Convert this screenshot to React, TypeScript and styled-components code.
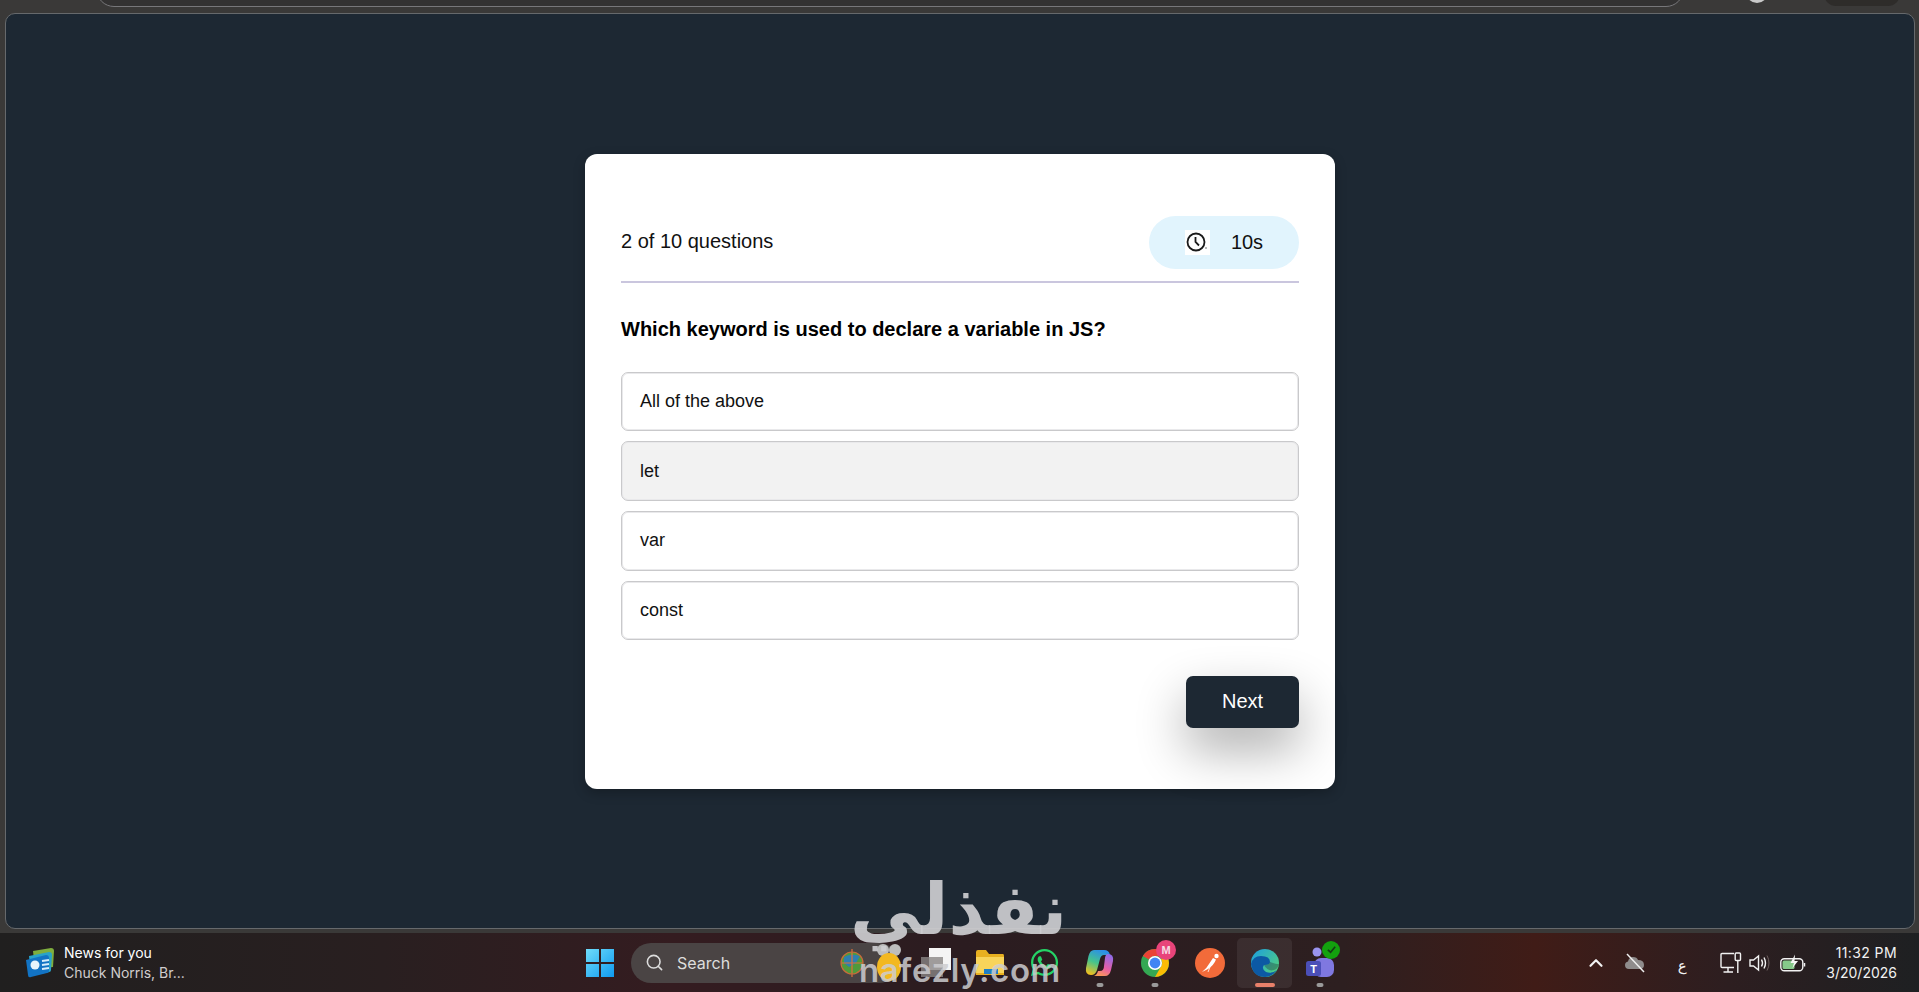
import React from "react";
import styled, { createGlobalStyle } from "styled-components";
import { ChevronUp, Search } from "lucide-react";
import { FaWhatsapp } from "react-icons/fa";

const GlobalStyle = createGlobalStyle`
  html, body {
    margin: 0;
    padding: 0;
    background: #3a3a3a;
    font-family: "Liberation Sans", Arial, sans-serif;
    overflow: hidden;
  }
  * { box-sizing: border-box; }
`;

const Screen = styled.div`
  position: relative;
  width: 1919px;
  height: 992px;
  display: flex;
  flex-direction: column;
  overflow: hidden;
  background: #3a3938;
`;

const BrowserStrip = styled.div`
  height: 13px;
  flex: none;
  display: flex;
  padding-left: 96px;
  overflow: hidden;
`;

const AddressBar = styled.div`
  width: 1588px;
  height: 37px;
  margin-top: -30px;
  flex: none;
  border: 1px solid #77777a;
  border-radius: 18px;
  background: #333232;
`;

const ProfileDot = styled.div`
  width: 22px;
  height: 22px;
  margin: -19px 0 0 62px;
  border-radius: 50%;
  background: #c9c9c9;
  flex: none;
`;

const ProfileChip = styled.div`
  width: 76px;
  height: 24px;
  margin: -18px 0 0 56px;
  border-radius: 12px;
  background: #2e2c2a;
  flex: none;
`;

const PagePanel = styled.main`
  flex: 1;
  margin: 0 4px 0 5px;
  display: flex;
  align-items: center;
  justify-content: center;
  background: #1d2833;
  border: 1px solid #66696c;
  border-radius: 10px;
`;

const QuizCard = styled.section`
  width: 750px;
  height: 635px;
  padding: 62px 36px 0;
  background: #fff;
  border-radius: 12px;
  box-shadow: 0 4px 12px rgba(0, 0, 0, 0.25);
`;

const QuizHeader = styled.header`
  display: flex;
  align-items: center;
  justify-content: space-between;
  padding-bottom: 12px;
  border-bottom: 2px solid #cac6de;
`;

const Counter = styled.span`
  padding-bottom: 2px;
  font-size: 20px;
  color: #111;
`;

const TimerPill = styled.div`
  width: 150px;
  height: 53px;
  display: flex;
  align-items: center;
  justify-content: center;
  gap: 21px;
  background: #e1f4fd;
  border-radius: 27px;
  font-size: 20px;
  color: #111;
`;

const ClockBox = styled.span`
  width: 25px;
  height: 25px;
  display: flex;
  align-items: center;
  justify-content: center;
  background: #fff;
`;

const Question = styled.h2`
  margin: 35px 0 31px;
  font-size: 20px;
  line-height: 23px;
  font-weight: 700;
  color: #000;
`;

const OptionList = styled.div`
  display: flex;
  flex-direction: column;
  gap: 10px;
`;

const Option = styled.div<{ $selected?: boolean }>`
  height: 59.7px;
  display: flex;
  align-items: center;
  padding-left: 18px;
  border: 1px solid #c9c9cb;
  border-radius: 7px;
  box-shadow: inset 0 0 0 1px #e9e9eb;
  font-size: 18px;
  color: #111;
  background: ${(p) => (p.$selected ? "#f2f2f2" : "#fff")};
`;

const Footer = styled.div`
  display: flex;
  justify-content: flex-end;
  margin-top: 36px;
`;

const NextButton = styled.button`
  width: 113px;
  height: 52px;
  padding: 0 0 2px;
  border: 0;
  border-radius: 7px;
  background: #1d2833;
  color: #fff;
  font-family: inherit;
  font-size: 20px;
  box-shadow: 0 22px 50px rgba(0, 0, 0, 0.32);
`;

const Taskbar = styled.footer`
  height: 59px;
  margin-top: 4px;
  flex: none;
  display: flex;
  align-items: center;
  padding-left: 25px;
  background: linear-gradient(90deg, #201f1f 0%, #291f20 20%, #341c20 35%, #2b1c20 50%, #2d1f20 70%, #401c17 80%, #2d1e20 90%, #1e2022 100%);
  color: #fff;
`;

const NewsWidget = styled.div`
  width: 560px;
  flex: none;
  display: flex;
  align-items: center;
  gap: 9px;
`;

const NewsText = styled.div`
  display: flex;
  flex-direction: column;
  font-family: "Inter", "Noto Sans", sans-serif;
  font-size: 14px;
  line-height: 20px;
`;

const NewsSub = styled.span`
  color: #d0cdcd;
`;

const AppRow = styled.div`
  display: flex;
  align-items: center;
`;

const SearchPill = styled.div`
  width: 268px;
  height: 40px;
  margin-left: 16px;
  display: flex;
  align-items: center;
  gap: 13px;
  padding-left: 14px;
  border-radius: 20px;
  background: #4a4444;
  font-family: "Inter", "Noto Sans", sans-serif;
  font-size: 16px;
  color: #ddd;
`;

const PillApps = styled.div`
  margin: 0 -5px 0 auto;
  display: flex;
  align-items: center;
  gap: 8px;
`;

const AppSlot = styled.div<{ $active?: boolean; $width?: number; $inset?: number }>`
  position: relative;
  width: ${(p) => p.$width ?? 55}px;
  height: 50px;
  display: flex;
  align-items: center;
  justify-content: center;
  padding-left: ${(p) => p.$inset ?? 0}px;
  border-radius: 5px;
  background: ${(p) => (p.$active ? "rgba(255,255,255,0.07)" : "transparent")};
`;

const RunningDot = styled.span<{ $accent?: boolean }>`
  position: absolute;
  left: 50%;
  bottom: 1px;
  transform: translateX(-50%);
  height: 4px;
  width: ${(p) => (p.$accent ? 20 : 7)}px;
  border-radius: 2px;
  background: ${(p) => (p.$accent ? "#e8806a" : "#9a9a9a")};
`;

const Tray = styled.div`
  margin-left: auto;
  display: flex;
  align-items: center;
  color: #f2f2f2;
`;

const TrayIcon = styled.span<{ $width: number; $gap?: number }>`
  width: ${(p) => p.$width}px;
  margin-left: ${(p) => p.$gap ?? 0}px;
  display: flex;
  align-items: center;
  justify-content: center;
`;

const ImeLabel = styled(TrayIcon)`
  padding-top: 6px;
  font-family: "DejaVu Sans", sans-serif;
  font-size: 15px;
`;

const Clock = styled.div`
  margin: 0 22px 0 15px;
  display: flex;
  flex-direction: column;
  align-items: flex-end;
  font-family: "Inter", "Noto Sans", sans-serif;
  font-size: 14px;
  line-height: 20px;
`;

const ClockTime = styled.span`
  letter-spacing: 0.4px;
`;

const WatermarkArabic = styled.div`
  position: absolute;
  left: 850px;
  top: 868px;
  width: 216px;
  text-align: center;
  font-family: "DejaVu Sans", sans-serif;
  font-weight: 700;
  font-size: 71px;
  line-height: 84px;
  color: rgba(205, 205, 208, 0.92);
  pointer-events: none;
`;

const WatermarkLatin = styled.div`
  position: absolute;
  left: 859px;
  top: 950px;
  font-family: "Inter", "Noto Sans", sans-serif;
  font-weight: 600;
  font-size: 33px;
  line-height: 40px;
  letter-spacing: 0.6px;
  color: rgba(205, 205, 208, 0.85);
  pointer-events: none;
`;

const NewsIcon = () => (
  <svg width="30" height="32" viewBox="0 0 30 32">
    <path d="M8 4 L26 1 Q29 1 29 4 L28 20 L10 22 Z" fill="#7fae3e" />
    <path d="M4 9 L24 5 Q27 5 27 8 L26 23 Q26 25 24 25 L6 29 Z" fill="#29a3c9" />
    <path d="M1 13 L21 8 Q24 8 24 11 L24 24 Q24 26 22 26 L6 30 Q3 31 3 28 Z" fill="#1273c4" />
    <circle cx="10" cy="18" r="4.5" fill="#e8f4fb" />
    <path d="M17 14 L24 13 M17 18 L24 17 M17 22 L24 21" stroke="#d7eefa" strokeWidth="2" />
  </svg>
);

const WindowsLogo = () => (
  <svg width="30" height="30" viewBox="0 0 30 30">
    <defs>
      <linearGradient id="winBlue" x1="0" y1="0" x2="1" y2="1">
        <stop offset="0" stopColor="#6fdcfa" />
        <stop offset="1" stopColor="#0f9af0" />
      </linearGradient>
    </defs>
    <path d="M1 1 H14 V14 H1 Z M16 1 H29 V14 H16 Z M1 16 H14 V29 H1 Z M16 16 H29 V29 H16 Z" fill="url(#winBlue)" />
  </svg>
);

const GlobeIcon = () => (
  <svg width="26" height="30" viewBox="0 0 26 30">
    <circle cx="12" cy="15" r="11" fill="#4f9a3c" />
    <path d="M4 9 Q11 5 20 8 L16 15 L9 19 L4 15 Z" fill="#2f7fb0" />
    <path d="M12 1 V29 M1 15 H23" stroke="#e0703a" strokeWidth="1.2" />
    <circle cx="12" cy="15" r="11" fill="none" stroke="#c86c3a" strokeWidth="1.2" />
  </svg>
);

const BeeIcon = () => (
  <svg width="30" height="40" viewBox="0 0 30 40">
    <circle cx="9" cy="7" r="6" fill="#bdbdbd" />
    <circle cx="21" cy="7" r="6" fill="#bdbdbd" />
    <ellipse cx="15" cy="24" rx="12" ry="14" fill="#f3b820" />
  </svg>
);

const NotesIcon = () => (
  <svg width="30" height="30" viewBox="0 0 30 30">
    <rect x="8" y="0" width="22" height="22" fill="#f4f4f4" />
    <rect x="0" y="9" width="22" height="20" fill="#8a8684" opacity="0.8" />
  </svg>
);

const FolderIcon = () => (
  <svg width="30" height="30" viewBox="0 0 30 30">
    <path d="M1 4 Q1 2 3 2 H11 L14 6 H28 Q29 6 29 8 V27 H1 Z" fill="#e8b020" />
    <path d="M1 9 H29 V25 H1 Z" fill="#f8d45a" />
    <rect x="9" y="21" width="14" height="5" fill="#1f7fc4" />
  </svg>
);

const CopilotIcon = () => (
  <svg width="29" height="28" viewBox="0 0 29 28">
    <defs>
      <linearGradient id="copA" x1="0.6" y1="0" x2="0.2" y2="1">
        <stop offset="0" stopColor="#2b8fe8" />
        <stop offset="0.5" stopColor="#45c48c" />
        <stop offset="1" stopColor="#f6c01c" />
      </linearGradient>
      <linearGradient id="copB" x1="0.7" y1="0" x2="0.3" y2="1">
        <stop offset="0" stopColor="#8f6be8" />
        <stop offset="0.6" stopColor="#e85fa4" />
        <stop offset="1" stopColor="#f89a56" />
      </linearGradient>
    </defs>
    <path d="M9 1 H19 Q24 1 25 6 L19 6 Q16 6 15 10 L12 21 Q10.500 26 6 26 Q0 26 1 19 L3.500 7 Q5 1 9 1 Z" fill="url(#copA)" />
    <path d="M23 5 Q29 5 28 12 L26 21 Q24.500 27 20 27 H9 Q12 26 13 22 L15 22 Q19 22 19 17 L20 9 Q20.500 5 23 5 Z" fill="url(#copB)" />
  </svg>
);

const ChromeIcon = () => (
  <svg width="30" height="30" viewBox="0 0 30 30">
    <circle cx="15" cy="15" r="14" fill="#34a853" />
    <path d="M15 1 A14 14 0 0 1 27.1 8 H15 A7 7 0 0 0 8.9 11.5 L2.9 8 A14 14 0 0 1 15 1 Z" fill="#ea4335" />
    <path d="M27.1 8 A14 14 0 0 1 15 29 L21 18.5 A7 7 0 0 0 21 11 Z" fill="#fbbc04" />
    <circle cx="15" cy="15" r="7" fill="#fff" />
    <circle cx="15" cy="15" r="5.4" fill="#4285f4" />
  </svg>
);

const CountBadge = styled.span`
  position: absolute;
  top: 2px;
  right: 6px;
  width: 20px;
  height: 20px;
  display: flex;
  align-items: center;
  justify-content: center;
  border-radius: 50%;
  background: #e8447a;
  color: #f6dbe4;
  font-size: 11px;
  font-weight: 700;
`;

const StatusBadge = styled.span`
  position: absolute;
  top: 3px;
  right: 7px;
  width: 18px;
  height: 18px;
  display: flex;
  align-items: center;
  justify-content: center;
  border-radius: 50%;
  background: #13a10e;
`;

const PostmanIcon = () => (
  <svg width="30" height="30" viewBox="0 0 30 30">
    <circle cx="15" cy="15" r="15" fill="#f26b3a" />
    <path d="M7 24 Q12 20 14 16 L18 10 L21 11.500 Q19 17 13 21 Z" fill="#fff" />
    <path d="M15 19 L13 24" stroke="#fff" strokeWidth="0.8" />
    <circle cx="21.500" cy="8" r="2.200" fill="#fff" />
  </svg>
);

const EdgeIcon = () => (
  <svg width="30" height="30" viewBox="0 0 30 30">
    <defs>
      <linearGradient id="edgeTop" x1="0" y1="0" x2="1" y2="0.8">
        <stop offset="0" stopColor="#1b9de2" />
        <stop offset="1" stopColor="#52d17c" />
      </linearGradient>
    </defs>
    <circle cx="15" cy="15" r="14" fill="url(#edgeTop)" />
    <path d="M1 16 Q3 8 11 8 Q20 8 20 14 Q20 17 14 17 Q11 21 16 24 Q22 26 27 22 Q22 29 15 29 Q3 29 1 16 Z" fill="#0c59a4" />
    <path d="M14 17 Q20 17 20 14 Q29 17 29 16 Q28 21 24 22 Q18 24 14 17 Z" fill="#1d2833" opacity="0.35" />
  </svg>
);

const TeamsIcon = () => (
  <svg width="30" height="32" viewBox="0 0 30 32">
    <circle cx="12" cy="5" r="4.5" fill="#9a94ef" />
    <rect x="9" y="11" width="20" height="19" rx="7" fill="#7f78e0" />
    <rect x="1" y="14" width="15" height="15" rx="2.5" fill="#4b4fb8" />
    <text x="8.5" y="25.5" textAnchor="middle" fontSize="11" fontWeight="700" fill="#fff" fontFamily="Liberation Sans">T</text>
  </svg>
);

const CheckMark = () => (
  <svg width="11" height="11" viewBox="0 0 12 12">
    <path d="M2 6.5 L5 9 L10 3" fill="none" stroke="#143d14" strokeWidth="1.8" />
  </svg>
);

const CloudSlash = () => (
  <svg width="22" height="22" viewBox="0 0 22 22">
    <path d="M5 17 Q1 17 1 13 Q1 10 4 9.5 Q5 5 9 5 Q13 5 14 8 Q20 8 20 13 Q20 17 16 17 Z" fill="#8f8c8c" />
    <path d="M3 2 L20 20" stroke="#efefef" strokeWidth="1.5" />
  </svg>
);

const MonitorIcon = () => (
  <svg width="22" height="22" viewBox="0 0 22 22" fill="none" stroke="#f2f2f2" strokeWidth="1.4">
    <path d="M14 1.5 H2 Q1 1.5 1 2.5 V14.5 Q1 15.5 2 15.5 H14" />
    <path d="M8 15.5 V19.5 M3.5 20 H13" />
    <rect x="15.2" y="1" width="5.3" height="7.5" rx="1" />
    <path d="M17.8 8.5 V21" />
  </svg>
);

const SpeakerIcon = () => (
  <svg width="22" height="20" viewBox="0 0 22 20" fill="none" stroke="#f2f2f2" strokeWidth="1.4">
    <path d="M1 7 H4.5 L9.5 3 V17 L4.5 13 H1 Z" />
    <path d="M12.5 6.5 Q14.5 10 12.5 13.5" />
    <path d="M15 4.5 Q18 10 15 15.5" />
    <path d="M18 2.5 Q22 10 18 17.5" stroke="#6e5f5f" strokeWidth="1" />
  </svg>
);

const BatteryIcon = () => (
  <svg width="26" height="18" viewBox="0 0 26 18">
    <rect x="0.8" y="4.8" width="22" height="12" rx="3.5" fill="none" stroke="#f2f2f2" strokeWidth="1.4" />
    <rect x="2.5" y="6.5" width="12" height="8.6" rx="1.5" fill="#86c98a" />
    <path d="M24.5 9 V12.5" stroke="#f2f2f2" strokeWidth="1.5" />
    <path d="M15 0.5 L10.5 9 H14 L12.5 14 L18 7 H14.5 Z" fill="#f5f5f5" />
  </svg>
);

const TimerClock = () => (
  <svg width="22" height="22" viewBox="0 0 22 22" fill="none" stroke="#1a1a1a" strokeWidth="1.8">
    <circle cx="10" cy="11" r="8.5" />
    <path d="M9.5 6 V11 L13 14.5" />
    <path d="M19 17 H21" strokeWidth="1" stroke="#777" />
  </svg>
);

const options = [
  { label: "All of the above" },
  { label: "let", selected: true },
  { label: "var" },
  { label: "const" },
];

export default function App() {
  return (
    <Screen>
      <GlobalStyle />
      <BrowserStrip>
        <AddressBar />
        <ProfileDot />
        <ProfileChip />
      </BrowserStrip>

      <PagePanel>
        <QuizCard>
          <QuizHeader>
            <Counter>2 of 10 questions</Counter>
            <TimerPill>
              <ClockBox>
                <TimerClock />
              </ClockBox>
              <span>10s</span>
            </TimerPill>
          </QuizHeader>
          <Question>Which keyword is used to declare a variable in JS?</Question>
          <OptionList>
            {options.map((o) => (
              <Option key={o.label} $selected={o.selected}>
                {o.label}
              </Option>
            ))}
          </OptionList>
          <Footer>
            <NextButton>Next</NextButton>
          </Footer>
        </QuizCard>
      </PagePanel>

      <Taskbar>
        <NewsWidget>
          <NewsIcon />
          <NewsText>
            <span>News for you</span>
            <NewsSub>Chuck Norris, Br...</NewsSub>
          </NewsText>
        </NewsWidget>
        <AppRow>
          <WindowsLogo />
          <SearchPill>
            <Search size={19} strokeWidth={2} />
            <span>Search</span>
            <PillApps>
              <GlobeIcon />
              <BeeIcon />
            </PillApps>
          </SearchPill>
          <AppSlot $width={63} $inset={11}>
            <NotesIcon />
          </AppSlot>
          <AppSlot>
            <FolderIcon />
          </AppSlot>
          <AppSlot>
            <FaWhatsapp size={31} color="#25d366" />
          </AppSlot>
          <AppSlot>
            <CopilotIcon />
            <RunningDot />
          </AppSlot>
          <AppSlot>
            <ChromeIcon />
            <CountBadge>M</CountBadge>
            <RunningDot />
          </AppSlot>
          <AppSlot>
            <PostmanIcon />
          </AppSlot>
          <AppSlot $active>
            <EdgeIcon />
            <RunningDot $accent />
          </AppSlot>
          <AppSlot>
            <TeamsIcon />
            <StatusBadge>
              <CheckMark />
            </StatusBadge>
            <RunningDot />
          </AppSlot>
        </AppRow>
        <Tray>
          <TrayIcon $width={28}>
            <ChevronUp size={22} strokeWidth={2.4} />
          </TrayIcon>
          <TrayIcon $width={50}>
            <CloudSlash />
          </TrayIcon>
          <ImeLabel $width={44}>ع</ImeLabel>
          <TrayIcon $width={28} $gap={13}>
            <MonitorIcon />
          </TrayIcon>
          <TrayIcon $width={30}>
            <SpeakerIcon />
          </TrayIcon>
          <TrayIcon $width={36}>
            <BatteryIcon />
          </TrayIcon>
          <Clock>
            <ClockTime>11:32 PM</ClockTime>
            <span>3/20/2026</span>
          </Clock>
        </Tray>
      </Taskbar>

      <WatermarkArabic>نفذلي</WatermarkArabic>
      <WatermarkLatin>nafezly.com</WatermarkLatin>
    </Screen>
  );
}
